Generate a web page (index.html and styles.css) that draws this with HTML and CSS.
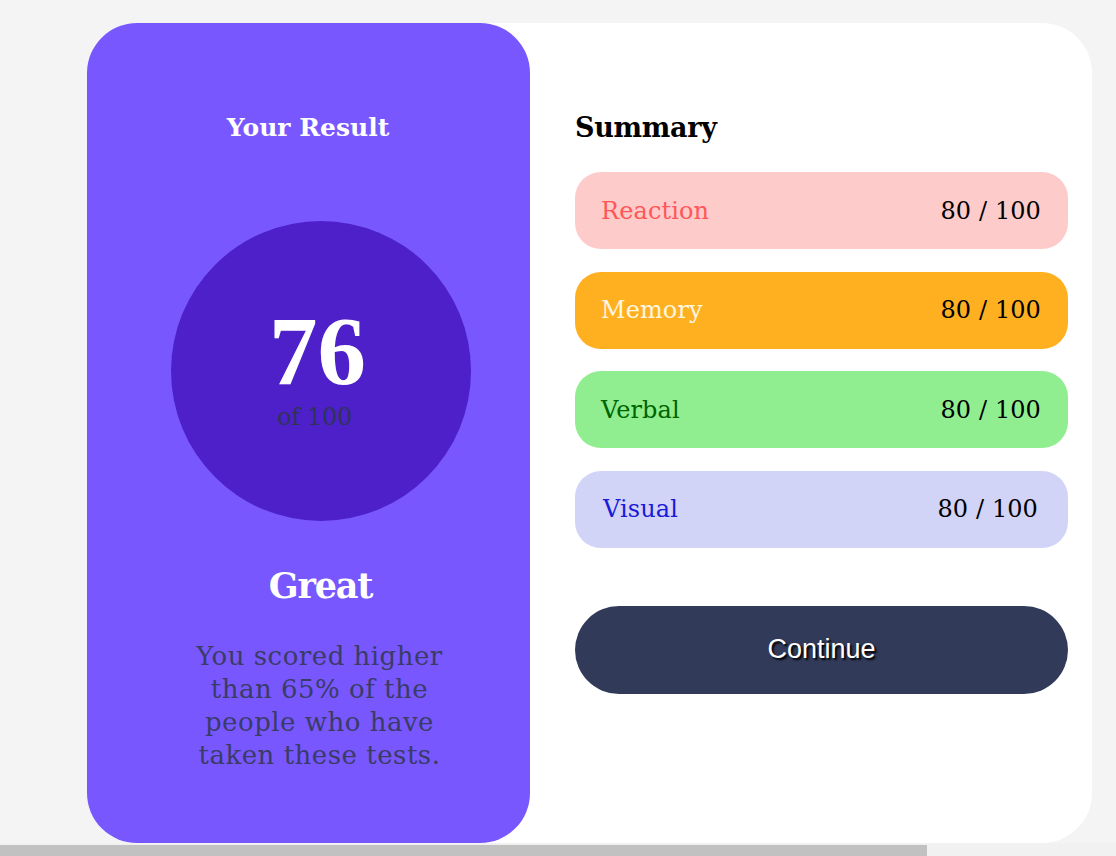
FILE: index.html
```html
<!DOCTYPE html>
<html lang="en">
<head>
<meta charset="utf-8">
<title>Results summary</title>
<link rel="stylesheet" href="styles.css">
</head>
<body>
<div class="viewport">
  <main class="card">
    <section class="result">
      <h1 class="result-title">Your Result</h1>
      <div class="score-circle">
        <span class="score">76</span>
        <span class="score-of">of 100</span>
      </div>
      <h2 class="verdict">Great</h2>
      <p class="blurb">You scored higher than 65% of the people who have taken these tests.</p>
    </section>
    <section class="summary">
      <h2 class="summary-title">Summary</h2>
      <ul class="rows">
        <li class="row row-reaction"><span class="label">Reaction</span><span class="value">80 / 100</span></li>
        <li class="row row-memory"><span class="label">Memory</span><span class="value">80 / 100</span></li>
        <li class="row row-verbal"><span class="label">Verbal</span><span class="value">80 / 100</span></li>
        <li class="row row-visual"><span class="label">Visual</span><span class="value">80 / 100</span></li>
      </ul>
      <button class="continue" type="button">Continue</button>
    </section>
  </main>
</div>
<div class="hscroll"><div class="hscroll-thumb"></div></div>
</body>
</html>
```

FILE: styles.css
```css
* { box-sizing: border-box; }

html, body {
  margin: 0;
  height: 856px;
  overflow: hidden;
}

body {
  background: #f4f4f4;
  display: flex;
  flex-direction: column;
  font-family: "DejaVu Serif", "Liberation Serif", serif;
}

.viewport {
  height: 843px;
  padding: 23px 0 0 87px;
}

.card {
  width: 1005px;
  height: 820px;
  background: #ffffff;
  border-radius: 50px;
  display: flex;
}

.result {
  width: 443px;
  height: 820px;
  background: #7857ff;
  border-radius: 50px;
  display: flex;
  flex-direction: column;
  align-items: center;
}

.result-title {
  margin: 89px 0 0 -1px;
  font-size: 25px;
  line-height: 32px;
  font-weight: 700;
  color: #ffffff;
  letter-spacing: 0;
}

.score-circle {
  margin: 77px 0 0 24px;
  width: 300px;
  height: 300px;
  border-radius: 50%;
  background: #4d20c9;
  display: flex;
  flex-direction: column;
  align-items: center;
  justify-content: center;
}

.score {
  font-family: "Liberation Serif", "DejaVu Serif", serif;
  font-size: 97px;
  line-height: 82px;
  font-weight: 700;
  color: #ffffff;
  margin: 0 0 0 -6px;
}

.score-of {
  font-size: 24px;
  line-height: 30px;
  color: #2f3357;
  margin: 9px 0 0 -12px;
  letter-spacing: -0.3px;
}

.verdict {
  margin: 43px 0 0 24px;
  font-size: 35px;
  line-height: 44px;
  font-weight: 700;
  color: #ffffff;
  letter-spacing: -1.2px;
}

.blurb {
  margin: 32px 0 0 22px;
  width: 290px;
  text-align: center;
  font-size: 26px;
  line-height: 33px;
  color: #3a3c66;
  letter-spacing: 0.5px;
}

.summary {
  flex: 1;
  padding: 88px 24px 0 45px;
  display: flex;
  flex-direction: column;
}

.summary-title {
  margin: 0;
  font-size: 27px;
  line-height: 34px;
  font-weight: 700;
  color: #000000;
  letter-spacing: -0.3px;
}

.rows {
  list-style: none;
  margin: 27px 0 0;
  padding: 0;
  display: flex;
  flex-direction: column;
  gap: 22.5px;
}

.row {
  height: 77px;
  border-radius: 26px;
  padding: 0 27px 0 26px;
  display: flex;
  align-items: center;
  justify-content: space-between;
  font-size: 24px;
  letter-spacing: 0.1px;
}

.value { color: #000000; }

.row-reaction { background: #fecbcb; }
.row-reaction .label { color: #ff5757; }

.row-memory { background: #ffb020; }
.row-memory .label { color: #fff6e0; }

.row-verbal { background: #90ee90; }
.row-verbal .label { color: #006400; }

.row-visual { background: #d1d3f7; padding: 0 30px 0 28px; }
.row-visual .label { color: #1a1ad8; }

.continue {
  margin-top: 58px;
  height: 88px;
  border: 0;
  border-radius: 44px;
  background: #313b59;
  color: #ffffff;
  font-family: "Liberation Sans", Arial, sans-serif;
  font-size: 27px;
  text-shadow: 2px 2px 2px #000000;
  padding: 0;
}

.hscroll {
  height: 13px;
  background: #f1f1f1;
  padding-top: 2px;
}

.hscroll-thumb {
  width: 927px;
  height: 11px;
  background: #c1c1c1;
}
```
